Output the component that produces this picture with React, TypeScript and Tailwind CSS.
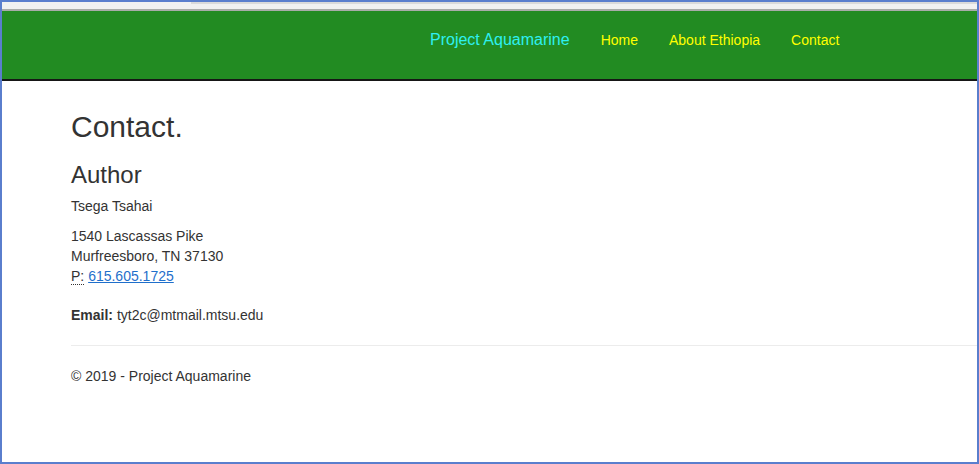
import React from 'react';

const navLinks = ['Home', 'About Ethiopia', 'Contact'];

export default function App() {
  return (
    <div className="w-[979px] h-[464px] border-2 border-[#5a7ecd] bg-white overflow-hidden flex flex-col font-['Liberation_Sans',Arial,sans-serif] text-[#333]">
      {/* window chrome strip */}
      <div className="h-[7px] flex bg-[#f1f1f1]">
        <div className="w-[189px]" />
        <div className="flex-1 border-t-2 border-[#dadada]" />
      </div>
      <div className="h-[2px] bg-[#a9aca9]" />

      {/* Navbar */}
      <nav className="h-[70px] bg-[#228b22] border-b-2 border-[#161616] flex items-start pt-[18px] pl-[428px]">
        <a className="text-[16px] leading-[22px] text-[#2ef0f0] mr-[31px]">Project Aquamarine</a>
        <ul className="flex gap-[31px] text-[14px] leading-[20px] text-[#ffff00] pt-[1px]">
          {navLinks.map(l => (
            <li key={l}>{l}</li>
          ))}
        </ul>
      </nav>

      {/* Body */}
      <div className="pl-[69px] pt-[29px] text-[14px] leading-[20px]">
        <h2 className="text-[30px] leading-[33px]">Contact.</h2>
        <h3 className="text-[24px] leading-[26px] mt-[19px]">Author</h3>
        <p className="mt-[8px]">Tsega Tsahai</p>
        <address className="not-italic mt-[10px]">
          1540 Lascassas Pike<br />
          Murfreesboro, TN 37130<br />
          <abbr title="Phone" className="no-underline border-b border-dotted border-[#333]">P:</abbr>{' '}
          <a className="text-[#1f6fcb] underline">615.605.1725</a>
        </address>
        <address className="not-italic mt-[19px]">
          <strong>Email:</strong> tyt2c@mtmail.mtsu.edu
        </address>

        <hr className="mt-[20px] border-0 border-t border-[#ececec]" />
        <footer className="mt-[20px]">
          <p>© 2019 - Project Aquamarine</p>
        </footer>
      </div>
    </div>
  );
}
